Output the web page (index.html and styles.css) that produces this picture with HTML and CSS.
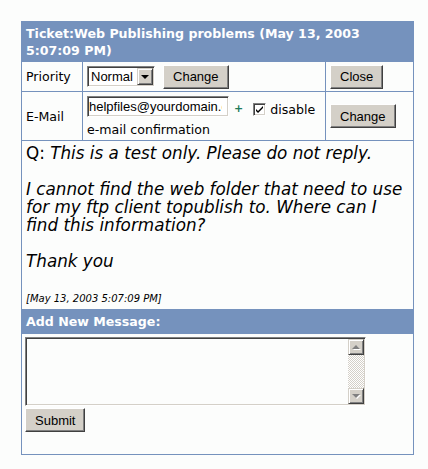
FILE: index.html
```html
<!DOCTYPE html>
<html lang="en">
<head>
    <meta charset="UTF-8">
    <meta name="viewport" content="width=device-width, initial-scale=1.0">
    <title>Ticket: Web Publishing problems</title>
    <link rel="stylesheet" href="styles.css">
</head>
<body>

    <table class="ticket">
        <colgroup>
            <col class="col-label">
            <col class="col-main">
            <col class="col-action">
        </colgroup>

        <!-- Ticket header -->
        <tr>
            <th colspan="3" class="bar title-bar">Ticket:Web Publishing problems (May 13, 2003 5:07:09 PM)</th>
        </tr>

        <!-- Priority -->
        <tr class="row-priority">
            <td class="label">Priority</td>
            <td class="controls">
                <span class="combo">
                    <select id="prioritySelect">
                        <option>Normal</option>
                        <option>High</option>
                        <option>Low</option>
                    </select>
                    <span class="combo-btn"><span class="arrow-down"></span></span>
                </span>
                <button class="btn btn-gap">Change</button>
            </td>
            <td class="action"><button class="btn">Close</button></td>
        </tr>

        <!-- E-Mail -->
        <tr class="row-email">
            <td class="label">E-Mail</td>
            <td class="controls">
                <div class="email-box">
                    <input type="text" class="field" value="helpfiles@yourdomain.com"><span class="plus">+</span><label class="check-label"><span class="check"><svg width="9" height="9" viewBox="0 0 9 9"><path d="M1 4 L3 6 L8 1 L8 3 L3 8 L1 6 Z" fill="#000"/></svg></span>disable e-mail confirmation</label>
                </div>
            </td>
            <td class="action"><button class="btn">Change</button></td>
        </tr>

        <!-- Message thread -->
        <tr>
            <td colspan="3" class="message">
                <div class="msg-body">Q: <em>This is a test only. Please do not reply.<br><br>I cannot find the web folder that need to use for my ftp client topublish to. Where can I find this information?<br><br>Thank you</em></div>
                <div class="stamp">[May 13, 2003 5:07:09 PM]</div>
            </td>
        </tr>

        <!-- Reply -->
        <tr>
            <th colspan="3" class="bar add-bar">Add New Message:</th>
        </tr>
        <tr>
            <td colspan="3" class="reply">
                <div class="textbox">
                    <textarea id="replyText"></textarea>
                    <div class="scrollbar">
                        <span class="sb-btn"><span class="arrow-up-dim"></span></span>
                        <span class="sb-track"></span>
                        <span class="sb-btn"><span class="arrow-down-dim"></span></span>
                    </div>
                </div>
                <button class="btn btn-submit">Submit</button>
            </td>
        </tr>
    </table>

</body>
</html>
```

FILE: styles.css
```css
/* General */
body {
    margin: 0;
    padding: 21px;
    background-color: #fcfdfc;
    font-family: "DejaVu Sans", Verdana, sans-serif;
    color: #000;
}

.ticket {
    border-collapse: collapse;
    width: 393px;
    border: 1px solid #7592bd;
    table-layout: fixed;
}

.col-label { width: 61px; }
.col-main { width: 243px; }

.ticket td,
.ticket th {
    border: 1px solid #7592bd;
    padding: 0 3px 0 4px;
    font-size: 12.6px;
    vertical-align: middle;
}

/* Blue bars */
.bar {
    background-color: #7592bd;
    color: #fff;
    text-align: left;
    font-weight: bold;
    font-size: 12.7px;
    line-height: 17px;
}

.ticket .title-bar {
    padding: 3px 4px 2px 4px;
    height: 34px;
}

.ticket .add-bar {
    padding: 3px 4px;
    height: 17px;
}

/* Rows */
.row-priority td {
    height: 29px;
}

.row-email td {
    height: 48px;
}

.email-box {
    height: 48px;
    box-sizing: border-box;
    overflow: hidden;
    line-height: 20px;
    padding-top: 4px;
}

/* Form controls - classic look */
.btn {
    font-family: "Liberation Sans", Arial, sans-serif;
    font-size: 13px;
    background-color: #d4d0c8;
    color: #000;
    height: 24px;
    padding: 0 9px;
    border: 1px solid;
    border-color: #fff #404040 #404040 #fff;
    box-shadow: inset -1px -1px #808080;
    vertical-align: middle;
    cursor: pointer;
}

.btn-gap {
    margin-left: 4px;
}

.btn-submit {
    display: block;
    margin-top: 2px;
}

.combo {
    display: inline-flex;
    width: 68px;
    height: 21px;
    box-sizing: border-box;
    padding: 1px;
    border: 1px solid;
    border-color: #808080 #fff #fff #808080;
    box-shadow: inset 1px 1px #404040, inset -1px -1px #d4d0c8;
    background: #fff;
    vertical-align: middle;
}

.combo select {
    appearance: none;
    -webkit-appearance: none;
    border: none;
    outline: none;
    background: #fff;
    font-family: "Liberation Sans", Arial, sans-serif;
    font-size: 13px;
    padding: 0 0 0 2px;
    width: 50px;
    height: 17px;
}

.combo-btn {
    display: flex;
    align-items: center;
    justify-content: center;
    width: 16px;
    height: 17px;
    box-sizing: border-box;
    background: #d4d0c8;
    border: 1px solid;
    border-color: #d4d0c8 #404040 #404040 #d4d0c8;
    box-shadow: inset 1px 1px #fff, inset -1px -1px #808080;
}

.arrow-down {
    width: 0;
    height: 0;
    border-left: 4px solid transparent;
    border-right: 4px solid transparent;
    border-top: 4px solid #000;
}

.field {
    font-family: "Liberation Sans", Arial, sans-serif;
    font-size: 13px;
    width: 142px;
    height: 21px;
    box-sizing: border-box;
    padding: 0 6px 0 1px;
    border: 1px solid;
    border-color: #808080 #fff #fff #808080;
    box-shadow: inset 1px 1px #404040, inset -1px -1px #d4d0c8;
    background: #fff;
    outline: none;
    vertical-align: 3px;
}

.plus {
    display: inline-block;
    color: #1e7b5a;
    font-weight: bold;
    font-size: 11px;
    line-height: 11px;
    margin: 0 10px 0 5px;
    vertical-align: 2px;
}

.check {
    display: inline-flex;
    align-items: center;
    justify-content: center;
    width: 13px;
    height: 13px;
    box-sizing: border-box;
    border: 1px solid;
    border-color: #808080 #fff #fff #808080;
    box-shadow: inset 1px 1px #404040, inset -1px -1px #d4d0c8;
    background: #fff;
    margin-right: 4px;
    vertical-align: 0;
}

/* Message */
.ticket .message {
    vertical-align: top;
    padding: 3px 4px 0 4px;
    height: 165px;
}

.msg-body {
    font-size: 16.8px;
    line-height: 18px;
}

.msg-body em {
    font-style: oblique;
}

.stamp {
    font-size: 10px;
    font-style: oblique;
    line-height: 12px;
    margin-top: 23px;
}

/* Reply */
.ticket .reply {
    vertical-align: top;
    padding: 3px 3px;
    height: 114px;
}

.textbox {
    display: flex;
    width: 341px;
    height: 69px;
    box-sizing: border-box;
    padding: 1px;
    border: 1px solid;
    border-color: #808080 #fff #fff #808080;
    box-shadow: inset 1px 1px #404040, inset -1px -1px #d4d0c8;
    background: #fcfdfc;
}

.textbox textarea {
    flex: 1;
    border: none;
    outline: none;
    resize: none;
    background: transparent;
    overflow: hidden;
    font-family: "Liberation Sans", Arial, sans-serif;
    font-size: 13px;
}

.scrollbar {
    display: flex;
    flex-direction: column;
    width: 16px;
}

.sb-btn {
    display: flex;
    align-items: center;
    justify-content: center;
    width: 16px;
    height: 16px;
    box-sizing: border-box;
    background: #d4d0c8;
    border: 1px solid;
    border-color: #d4d0c8 #404040 #404040 #d4d0c8;
    box-shadow: inset 1px 1px #fff, inset -1px -1px #808080;
}

.sb-track {
    flex: 1;
    background: repeating-conic-gradient(#d4d0c8 0 25%, #fff 0 50%) 0 0 / 2px 2px;
}

.arrow-up-dim {
    width: 0;
    height: 0;
    border-left: 4px solid transparent;
    border-right: 4px solid transparent;
    border-bottom: 4px solid #808080;
    filter: drop-shadow(1px 1px 0 #fff);
}

.arrow-down-dim {
    width: 0;
    height: 0;
    border-left: 4px solid transparent;
    border-right: 4px solid transparent;
    border-top: 4px solid #808080;
    filter: drop-shadow(1px 1px 0 #fff);
}
```
